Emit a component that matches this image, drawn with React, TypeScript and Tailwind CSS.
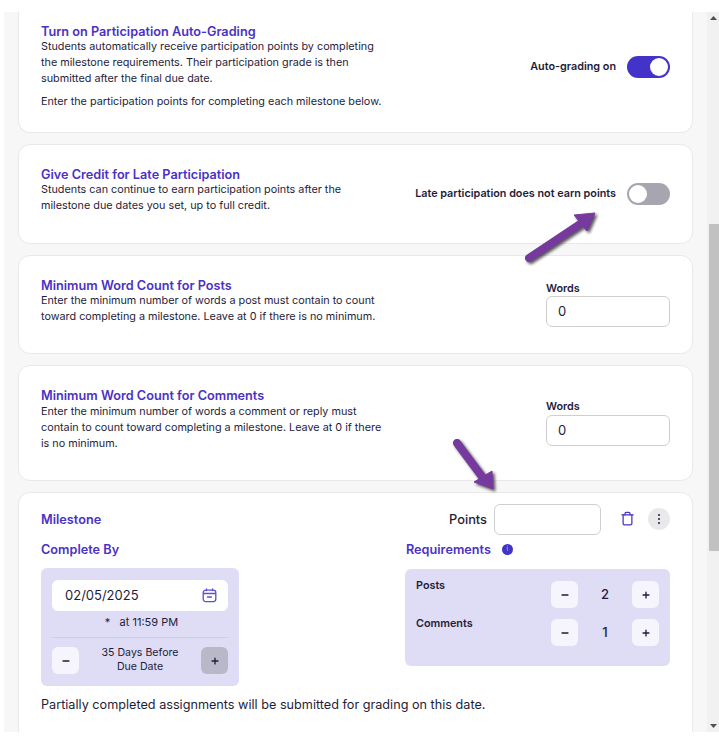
import { Minus, Plus, Trash } from "lucide-react";
import type { ReactNode } from "react";

const Title = ({ children }: { children: ReactNode }) => (
  <h3 className="text-[12.7px] leading-[15px] font-semibold text-[#4b32c3]">{children}</h3>
);

const Desc = ({ children }: { children: ReactNode }) => (
  <p className="text-[10.8px] leading-[16px] text-[#1f1d3a]">{children}</p>
);

const Toggle = ({ on }: { on: boolean }) => (
  <div className={`flex h-[22px] w-[43px] items-center rounded-full px-[2px] ${on ? "justify-end bg-[#4433c9]" : "justify-start bg-[#a7a5b0]"}`}>
    <div className="h-[18px] w-[18px] rounded-full bg-white" />
  </div>
);

const Card = ({ className, children }: { className: string; children: ReactNode }) => (
  <div className={`rounded-xl border border-[#e9e9e9] bg-white ${className}`}>{children}</div>
);

const WordsField = ({ gap }: { gap: string }) => (
  <div className="w-[124px]">
    <div className={`pt-px text-[10.8px] leading-[14px] font-semibold text-[#1f1d3a] ${gap}`}>Words</div>
    <div className="flex h-[31px] items-center rounded-md border border-[#cfcfcf] bg-white px-[11px] text-[13px] text-[#1f1d3a]">0</div>
  </div>
);

const StepButton = ({ kind, muted }: { kind: "minus" | "plus"; muted?: boolean }) => (
  <div className={`flex h-[27px] w-[27px] items-center justify-center rounded-md ${muted ? "bg-[#b9b8c9]" : "bg-[#f6f5fd]"}`}>
    {kind === "minus" ? <Minus size={10} strokeWidth={3.5} color="#1f1d3a" /> : <Plus size={10} strokeWidth={3.2} color="#1f1d3a" />}
  </div>
);

const Counter = ({ label, value }: { label: string; value: number }) => (
  <div className="flex h-[27px] justify-between">
    <span className="text-[10.8px] leading-[10px] font-semibold text-[#1f1d3a]">{label}</span>
    <div className="flex items-center">
      <StepButton kind="minus" />
      <span className="w-[54px] text-center text-[13px] font-medium text-[#1f1d3a]">{value}</span>
      <StepButton kind="plus" />
    </div>
  </div>
);

const CalendarIcon = () => (
  <svg width="15" height="15" viewBox="0 0 15 15" fill="none" stroke="#5b50d0" strokeWidth="1.3" strokeLinecap="round">
    <rect x="1.2" y="2.2" width="12.6" height="11.4" rx="2.5" />
    <path d="M1.500 5.500h12M4.500 1v1.500M10.500 1v1.500M5.500 9h4" />
  </svg>
);

export default function App() {
  return (
    <div className="relative h-[744px] w-[719px] overflow-hidden bg-white font-['Inter',sans-serif]">
      <div className="flex h-[732px] pt-3 pl-1">
        <div className="flex h-[720px] w-[703px] flex-col gap-[11px] overflow-hidden bg-[#f7f7f7] px-[14px]">
          <Card className="flex h-[121px] shrink-0 items-start justify-between rounded-t-none border-t-0 pt-[12px] pr-[22px] pl-[22px]">
            <div className="w-[345px]">
              <Title>Turn on Participation Auto-Grading</Title>
              <Desc>Students automatically receive participation points by completing the milestone requirements. Their participation grade is then submitted after the final due date.</Desc>
              <div className="mt-[7px]">
                <Desc>Enter the participation points for completing each milestone below.</Desc>
              </div>
            </div>
            <div className="mt-[32px] flex items-center gap-[11px]">
              <span className="text-[10.8px] font-semibold text-[#1f1d3a]">Auto-grading on</span>
              <Toggle on />
            </div>
          </Card>

          <Card className="flex h-[100px] shrink-0 items-start justify-between pt-[22px] pr-[22px] pl-[22px]">
            <div className="w-[345px]">
              <Title>Give Credit for Late Participation</Title>
              <Desc>Students can continue to earn participation points after the milestone due dates you set, up to full credit.</Desc>
            </div>
            <div className="mt-[16px] flex items-center gap-[11px]">
              <span className="text-[10.8px] font-semibold text-[#1f1d3a]">Late participation does not earn points</span>
              <Toggle on={false} />
            </div>
          </Card>

          <Card className="flex h-[99px] shrink-0 items-start justify-between pt-[22px] pr-[22px] pl-[22px]">
            <div className="w-[345px]">
              <Title>Minimum Word Count for Posts</Title>
              <Desc>Enter the minimum number of words a post must contain to count toward completing a milestone. Leave at 0 if there is no minimum.</Desc>
            </div>
            <div className="mt-[3px]">
              <WordsField gap="mb-0" />
            </div>
          </Card>

          <Card className="flex h-[116px] shrink-0 items-start justify-between pt-[22px] pr-[22px] pl-[22px]">
            <div className="w-[345px]">
              <Title>Minimum Word Count for Comments</Title>
              <div className="mt-px">
                <Desc>Enter the minimum number of words a comment or reply must contain to count toward completing a milestone. Leave at 0 if there is no minimum.</Desc>
              </div>
            </div>
            <div className="mt-[11px]">
              <WordsField gap="mb-px" />
            </div>
          </Card>

          <Card className="h-[260px] shrink-0 px-[22px] pt-[10px]">
            <div className="flex h-[32px] items-center justify-between">
              <Title>Milestone</Title>
              <div className="flex items-center">
                <span className="mt-px mr-[7px] text-[12.8px] font-medium text-[#1f1d3a]">Points</span>
                <div className="h-[31px] w-[107px] rounded-md border border-[#cfcfcf] bg-white" />
                <Trash size={15} color="#4b32c3" className="-mt-px ml-[19px]" />
                <div className="ml-[13px] flex h-[22px] w-[22px] items-center justify-center rounded-full bg-[#e9e9ec]">
                  <span className="flex flex-col gap-[2px]">
                    <i className="block h-[2px] w-[2px] rounded-full bg-[#1f1d3a]" />
                    <i className="block h-[2px] w-[2px] rounded-full bg-[#1f1d3a]" />
                    <i className="block h-[2px] w-[2px] rounded-full bg-[#1f1d3a]" />
                  </span>
                </div>
              </div>
            </div>

            <div className="mt-[7px] flex items-start justify-between">
              <div className="w-[198px]">
                <Title>Complete By</Title>
                <div className="mt-[11px] rounded-md bg-[#dfdcf6] px-[11px] pt-[12px] pb-[12px]">
                  <div className="flex h-[31px] items-center justify-between rounded-md bg-white pr-[11px] pl-[13px] text-[13px] text-[#1f1d3a]">
                    02/05/2025
                    <CalendarIcon />
                  </div>
                  <div className="h-[26px] pl-[3px] text-center text-[11px] leading-[22px] text-[#1f1d3a]">*&nbsp;&nbsp; at 11:59 PM</div>
                  <div className="flex items-center justify-between border-t border-[#cfcce6] pt-[9px]">
                    <StepButton kind="minus" />
                    <div className="-mt-[2px] text-center text-[10.6px] leading-[14px] text-[#1f1d3a]">
                      35 Days Before
                      <br />
                      Due Date
                    </div>
                    <StepButton kind="plus" muted />
                  </div>
                </div>
              </div>

              <div className="w-[265px]">
                <div className="ml-px flex items-center gap-[11px]">
                  <Title>Requirements</Title>
                  <div className="flex h-[11px] w-[11px] items-center justify-center rounded-full bg-[#4433c9] text-[7px] text-[#b9b5f0]">i</div>
                </div>
                <div className="mt-[12px] flex h-[97px] flex-col gap-[11px] rounded-md bg-[#dfdcf6] pt-[12px] pr-[11px] pl-[11px]">
                  <Counter label="Posts" value={2} />
                  <Counter label="Comments" value={1} />
                </div>
              </div>
            </div>

            <p className="mt-[10px] text-[12.66px] leading-[18px] text-[#1f1d3a]">Partially completed assignments will be submitted for grading on this date.</p>
          </Card>
        </div>

        <div className="relative flex h-[720px] w-3 flex-col bg-[#f1f1f1]">
          <div className="flex h-[12px] items-center justify-center">
            <svg width="7" height="4" viewBox="0 0 7 4"><path d="M3.5 0 7 4H0z" fill="#505050" /></svg>
          </div>
          <div className="mt-[200px] ml-[2px] h-[327px] w-[10px] bg-[#c1c1c1]" />
          <div className="mt-auto flex h-[12px] items-center justify-center">
            <svg width="7" height="4" viewBox="0 0 7 4"><path d="M0 0h7L3.500 4z" fill="#505050" /></svg>
          </div>
        </div>
      </div>

      <svg className="absolute top-[205px] left-[515px] overflow-visible [filter:drop-shadow(2px_2px_1.5px_rgba(0,0,0,0.65))]" width="90" height="70" viewBox="0 0 90 70">
        <path d="M14 53 68 17" stroke="#763a9e" strokeWidth="8" strokeLinecap="round" />
        <path d="M59 10 80 8 72 26Z" fill="#763a9e" stroke="#763a9e" strokeWidth="1" strokeLinejoin="round" />
      </svg>
      <svg className="absolute top-[430px] left-[445px] overflow-visible [filter:drop-shadow(2px_2px_1.5px_rgba(0,0,0,0.65))]" width="60" height="70" viewBox="0 0 60 70">
        <path d="M12 13 41 52" stroke="#763a9e" strokeWidth="8" strokeLinecap="round" />
        <path d="M29 52 47 41 48 59Z" fill="#763a9e" stroke="#763a9e" strokeWidth="1" strokeLinejoin="round" />
      </svg>
    </div>
  );
}
